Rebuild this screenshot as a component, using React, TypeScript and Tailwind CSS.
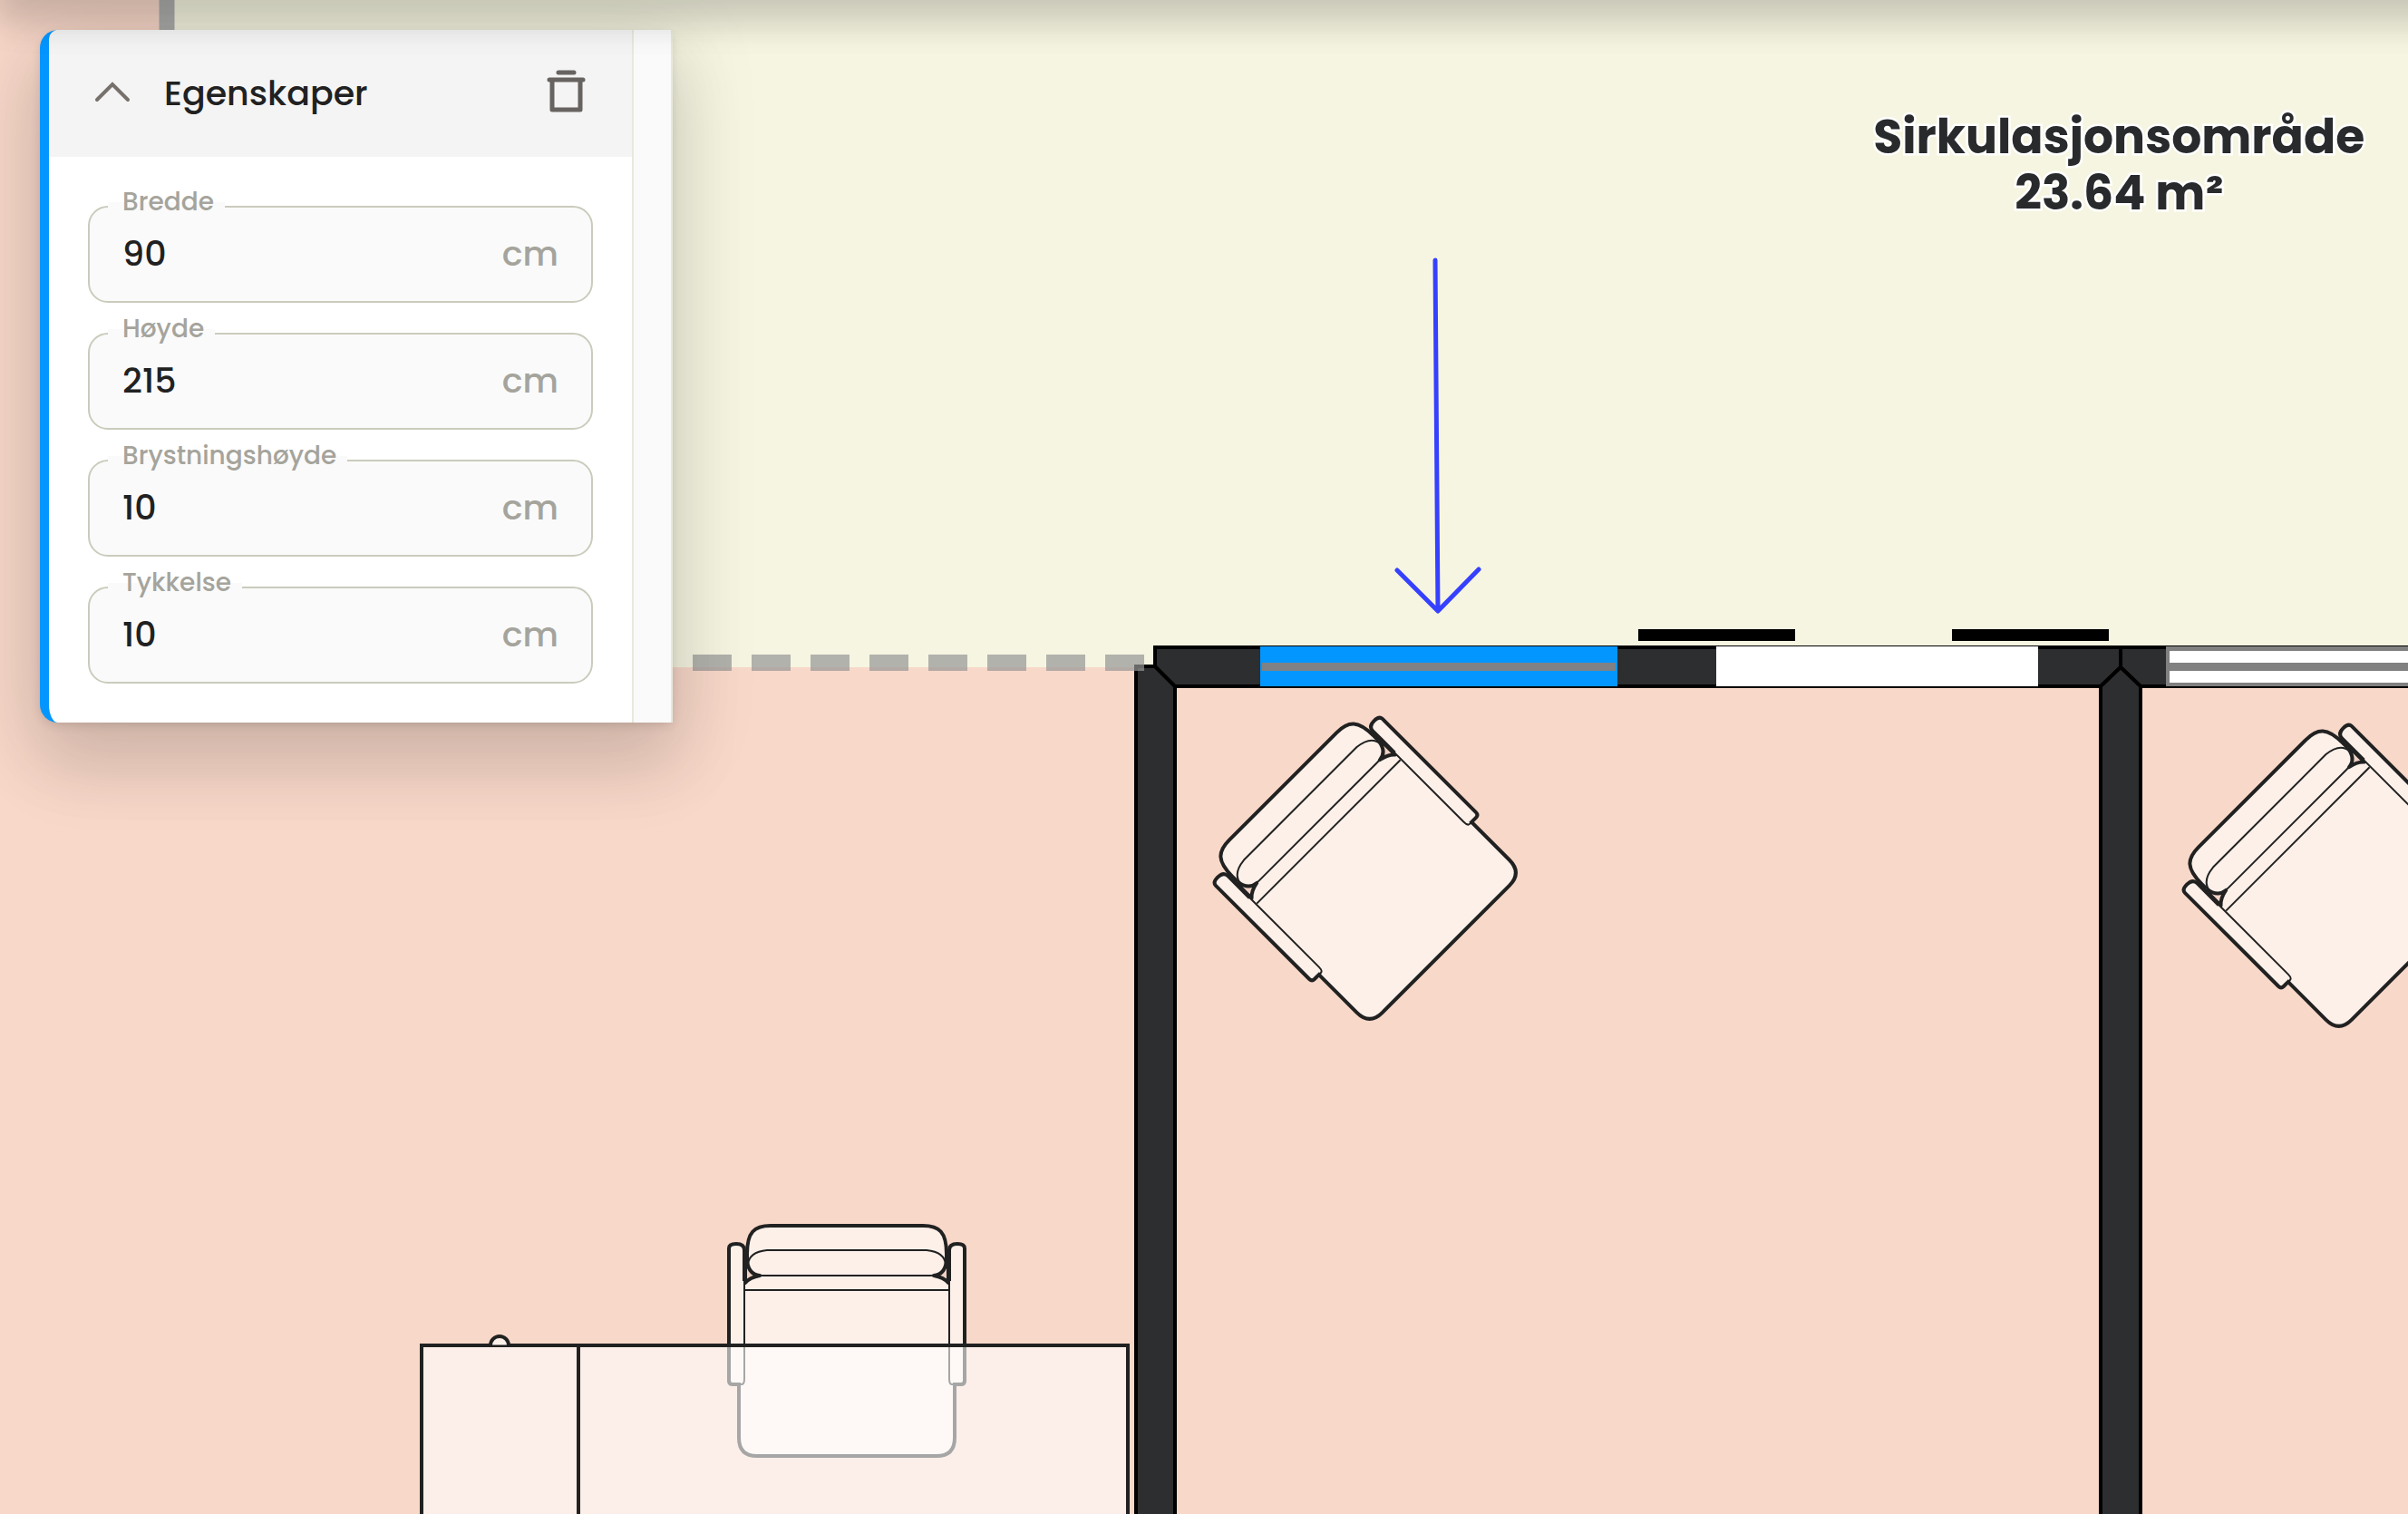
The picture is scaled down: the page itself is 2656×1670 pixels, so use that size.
import { useState } from "react";

const FIELDS = [
  { id: "bredde", label: "Bredde", value: "90" },
  { id: "hoyde", label: "Høyde", value: "215" },
  { id: "brystning", label: "Brystningshøyde", value: "10" },
  { id: "tykkelse", label: "Tykkelse", value: "10" },
];

/* Armchair seen from above, centred on the origin with its back upwards. */
function Chair({ transform }: { transform: string }) {
  return (
    <g transform={transform} fill="#fcf0e9" stroke="#212121" strokeLinejoin="round">
      <path
        d="M-110 -72V-96C-110 -120 -102 -127 -84 -127H84C102 -127 110 -120 110 -96V-72L119 -60V107Q119 127 99 127H-99Q-119 127 -119 107V-60Z"
        strokeWidth="4"
      />
      <path
        d="M-88 -100H88Q108 -98 109 -84Q108 -72 92 -72H-92Q-108 -72 -109 -84Q-108 -98 -88 -100Z"
        strokeWidth="2"
      />
      <path d="M-110 -88Q-108 -73 -96 -72Q-107 -70 -112 -64V-92" fill="#f0d2c5" strokeWidth="4" />
      <path d="M110 -88Q108 -73 96 -72Q107 -70 112 -64V-92" fill="#f0d2c5" strokeWidth="4" />
      <path d="M-112 -56H112" strokeWidth="2" />
      <path d="M-130 -102Q-130 -107 -122 -107Q-113 -107 -113 -100V42Q-113 48 -116 48H-126Q-130 48 -130 44Z" strokeWidth="2" />
      <path d="M130 -102Q130 -107 122 -107Q113 -107 113 -100V42Q113 48 116 48H126Q130 48 130 44Z" strokeWidth="2" />
      <path d="M-113 -66V-100Q-113 -107 -122 -107Q-130 -107 -130 -102V44Q-130 48 -126 48H-117" fill="none" strokeWidth="4" />
      <path d="M113 -66V-100Q113 -107 122 -107Q130 -107 130 -102V44Q130 48 126 48H117" fill="none" strokeWidth="4" />
    </g>
  );
}

function FloorPlan() {
  return (
    <svg
      className="absolute inset-0 h-full w-full"
      viewBox="0 0 2656 1670"
      preserveAspectRatio="xMinYMin slice"
      role="img"
      aria-label="Plantegning"
    >
      <rect width="2656" height="1670" fill="#f8d8c9" />
      <path d="M184 0H2656V736H184Z" fill="#f6f5e1" />
      <path d="M184 0V736" stroke="#adadab" strokeWidth="17" />

      <Chair transform="translate(934 1479)" />
      <g fill="#ffffff99" stroke="#212121" strokeWidth="4">
        <path d="M465 1684V1484H1244V1684Z" />
        <path d="M638 1484V1684" />
      </g>
      <path d="M541 1484A10 10 0 0 1 561 1484" fill="#fcf0e9" stroke="#212121" strokeWidth="4" />
      <path d="M543 1484H559" stroke="#212121" strokeWidth="1" />
      <Chair transform="translate(1505 957) rotate(-45)" />
      <Chair transform="translate(2574 965) rotate(-45)" />

      <g fill="#2d2e30" stroke="#000" strokeWidth="4">
        <path d="M1253 1690V735H1274L1296 757V1690Z" />
        <path d="M1274 714H2339V736L2317 757H1296L1274 735Z" />
        <path d="M2339 714H2700V757H2361L2339 736Z" />
        <path d="M2317 1690V757L2339 736L2361 757V1690Z" />
      </g>
      <path d="M764 731H1262" stroke="#969696" strokeOpacity="0.7" strokeWidth="18" strokeDasharray="43 22" />

      <rect x="1390" y="713" width="394" height="44" fill="#0496ff" />
      <rect x="1392" y="731" width="390" height="9" fill="#808184" />
      <rect x="1893" y="713" width="355" height="44" fill="#fff" />
      <rect x="2389" y="713" width="300" height="44" fill="#808080" />
      <rect x="2393" y="718" width="300" height="13" fill="#fff" />
      <rect x="2393" y="740" width="300" height="13" fill="#fff" />
      <rect x="1807" y="694" width="173" height="13" />
      <rect x="2153" y="694" width="173" height="13" />

      <path
        d="M1583 287L1586 674M1541 629L1586 674L1631 628"
        fill="none"
        stroke="#3640ff"
        strokeWidth="5"
        strokeLinecap="round"
        strokeLinejoin="round"
      />
    </svg>
  );
}

function Field({ id, label, initial }: { id: string; label: string; initial: string }) {
  const [value, setValue] = useState(initial);
  return (
    <div className="relative flex h-[107px] items-center rounded-[22px] border-2 border-[#cbcbbd] bg-[#fafafa] px-9 pb-0.5">
      <label
        htmlFor={id}
        className="absolute -top-6 left-5 bg-linear-to-b from-white from-50% to-[#fafafa] to-50% pr-3 pl-4 text-[28px] leading-9 font-medium text-[#a5a49c]"
      >
        {label}
      </label>
      <input
        id={id}
        value={value}
        onChange={(e) => setValue(e.target.value)}
        className="w-full min-w-0 flex-1 bg-transparent text-[38px] font-medium text-[#212121] outline-none"
      />
      <span className="text-[38px] font-medium text-[#a5a49c]">cm</span>
    </div>
  );
}

export default function App() {
  const [open, setOpen] = useState(true);
  return (
    <main className="relative min-h-screen overflow-hidden font-[Poppins,Inter,sans-serif]">
      <FloorPlan />
      <div className="absolute top-[120px] left-[88%] flex -translate-x-1/2 flex-col text-center text-[52px] leading-[62px] font-bold whitespace-nowrap text-[#282a2c] [paint-order:stroke_fill] [-webkit-text-stroke:5px_#fff]">
        <span>Sirkulasjonsområde</span>
        <span>23.64 m²</span>
      </div>
      <div className="relative px-11 pt-[33px]">
        <aside className="flex w-[698px] rounded-l-[20px] border-l-10 border-[#0496ff] bg-white shadow-[0_4px_12px_-2px_rgba(0,0,0,0.14),0_48px_76px_6px_rgba(0,0,0,0.11),0_18px_92px_16px_rgba(0,0,0,0.08)]">
          <div className="min-w-0 flex-1 overflow-hidden rounded-l-[10px]">
            <header className="flex h-[140px] items-center bg-[#f4f4f4] pr-[51px] pb-0.5 pl-[50px]">
              <button
                type="button"
                className="flex flex-1 items-center gap-[37px] text-left text-[38px] font-medium text-[#212121]"
                aria-expanded={open}
                onClick={() => setOpen(!open)}
              >
                <svg width="40" height="24" viewBox="0 0 40 24" fill="none" stroke="#77716c" strokeWidth="4">
                  <path d="M3 20L20 3L37 20" strokeLinecap="round" />
                </svg>
                Egenskaper
              </button>
              <button type="button" aria-label="Slett">
                <svg width="44" height="50" viewBox="0 0 44 50" fill="none" stroke="#666360" strokeWidth="5">
                  <path d="M14 3H31M4 11H41" strokeLinecap="round" />
                  <path d="M7 11V44H38V11" strokeLinejoin="round" />
                </svg>
              </button>
            </header>
            {open && (
              <div className="flex flex-col gap-[33px] px-[43px] pt-[54px] pb-[43px]">
                {FIELDS.map((f) => (
                  <Field key={f.id} id={f.id} label={f.label} initial={f.value} />
                ))}
              </div>
            )}
          </div>
          <div className="w-[45px] border-x-2 border-[#e8e8dc] bg-[#fafafa]" />
        </aside>
      </div>
      <div className="pointer-events-none absolute -top-40 -right-24 left-0 h-40 shadow-[0_24px_34px_4px_rgba(0,0,0,0.1),0_10px_44px_8px_rgba(0,0,0,0.1)]" />
    </main>
  );
}
